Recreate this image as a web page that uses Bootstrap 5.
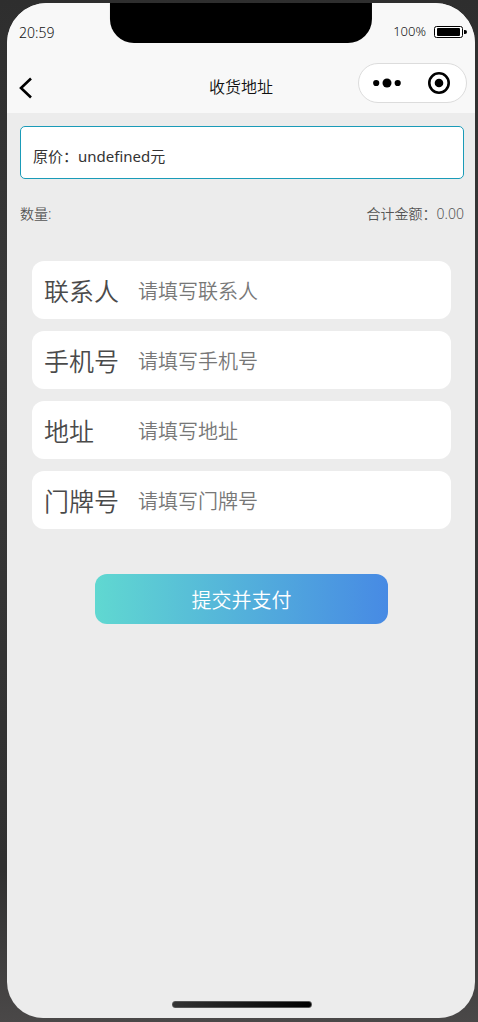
<!DOCTYPE html>
<html lang="zh-CN">
<head>
<meta charset="utf-8">
<meta name="viewport" content="width=device-width, initial-scale=1">
<title>收货地址</title>
<link href="https://cdn.jsdelivr.net/npm/bootstrap@5.3.0/dist/css/bootstrap.min.css" rel="stylesheet">
<style>
  body {
    background: linear-gradient(#2e2e2e, #383838 30%, #303030 85%, #4a4848);
    font-family: "Noto Sans", "Noto Sans CJK SC", sans-serif;
    font-weight: 350;
    padding: 3px 3px 4px 7px;
  }
  .phone { background: #ececec; border-radius: 40px 40px 36px 36px; }
  .phone-head { background: #f8f8f8; color: #111; padding-bottom: 2px; }
  .notch { width: 56%; height: 40px; background: #000; border-radius: 0 0 24px 24px; }
  .status-bar { height: 60px; padding: 0 8px 2px 12px; font-size: 14px; }
  .status-bar .battery-text { font-size: 13px; }
  .title-bar { height: 48px; padding: 0 8px 0 12px; }
  .title-bar h1 { font-size: 16px; font-weight: 350; padding: 2px 4px 0 0; }
  .side { flex: 1 1 0; }
  .capsule { width: 109px; height: 40px; border: 1px solid #dcdcdc; background: #fff; padding-right: 2px; }
  .plain-btn { background: none; border: 0; padding: 0; color: #000; line-height: 0; }
  .page-body { padding: 13px 11px 10px 13px; color: #555; }
  .price { border: 1px solid #1a9bb8; border-radius: 5px; padding: 18px 12px 11px; font-size: 15px; line-height: 22px; color: #333; font-weight: 400; }
  .totals { font-size: 14px; line-height: 20px; margin-top: 25px; }
  .order-form { margin: 37px 13px 0 12px; }
  .fields { gap: 12px; }
  .field { height: 58px; border-radius: 12px; padding: 3px 12px 0; }
  .field label { flex: 0 0 94px; font-size: 25px; color: #4a4a4a; }
  .field input { font-size: 20px; font-weight: 350; }
  .field input::placeholder { color: #777; opacity: 1; }
  .pay { width: 70%; height: 50px; margin-top: 45px; border-radius: 12px; font-size: 20px; font-weight: 350; color: #fff; background: linear-gradient(90deg, #60d8d1, #478ae4); }
  .pay.btn { padding: 3px 0 0; }
  .home-bar { width: 140px; height: 7px; border-radius: 3px; background: linear-gradient(90deg, #333, #000); border: 1px solid #555; }
</style>
</head>
<body class="d-flex flex-column min-vh-100">
<div class="phone position-relative flex-grow-1 d-flex flex-column overflow-hidden">
  <div class="notch position-absolute top-0 start-50 translate-middle-x"></div>
  <header class="phone-head">
    <div class="status-bar d-flex align-items-center justify-content-between">
      <span>20:59</span>
      <span class="d-flex align-items-center gap-2">
        <span class="battery-text">100%</span>
        <svg width="33" height="12" viewBox="0 0 33 12" aria-hidden="true"><rect x=".5" y=".5" width="28" height="11" rx="2" fill="#fff" stroke="#000"/><rect x="3" y="2" width="23" height="8" rx="1"/><path d="M30 4h1q2 0 2 2t-2 2h-1z"/></svg>
      </span>
    </div>
    <nav class="title-bar d-flex align-items-center">
      <div class="side">
        <button type="button" class="plain-btn" aria-label="返回"><svg width="14" height="22" viewBox="0 0 14 22" fill="none" stroke="#000" stroke-width="2.6"><path d="M12 1.5 2 11l10 9.500"/></svg></button>
      </div>
      <h1 class="m-0">收货地址</h1>
      <div class="side d-flex justify-content-end align-self-start">
        <div class="capsule rounded-pill d-flex align-items-center">
          <button type="button" class="plain-btn flex-fill" aria-label="更多"><svg width="28" height="10" viewBox="0 0 28 10"><circle cx="3.200" cy="5" r="3.100"/><circle cx="14" cy="5" r="4.500"/><circle cx="24.700" cy="5" r="3.100"/></svg></button>
          <button type="button" class="plain-btn flex-fill" aria-label="关闭"><svg width="22" height="22" viewBox="0 0 22 22"><circle cx="11" cy="11" r="9.700" fill="none" stroke="#000" stroke-width="2.600"/><circle cx="11" cy="11" r="4.300"/></svg></button>
        </div>
      </div>
    </nav>
  </header>
  <main class="page-body flex-grow-1 d-flex flex-column">
    <div class="price bg-white">原价：undefined元</div>
    <div class="totals d-flex justify-content-between"><span>数量:</span><span>合计金额：0.00</span></div>
    <form class="order-form d-flex flex-column">
      <div class="fields d-grid">
        <div class="field bg-white d-flex align-items-center"><label for="contact">联系人</label><input id="contact" type="text" class="form-control-plaintext p-0" placeholder="请填写联系人"></div>
        <div class="field bg-white d-flex align-items-center"><label for="phone">手机号</label><input id="phone" type="tel" class="form-control-plaintext p-0" placeholder="请填写手机号"></div>
        <div class="field bg-white d-flex align-items-center"><label for="address">地址</label><input id="address" type="text" class="form-control-plaintext p-0" placeholder="请填写地址"></div>
        <div class="field bg-white d-flex align-items-center"><label for="door">门牌号</label><input id="door" type="text" class="form-control-plaintext p-0" placeholder="请填写门牌号"></div>
      </div>
      <button type="submit" class="pay btn border-0 align-self-center">提交并支付</button>
    </form>
    <div class="home-bar mt-auto align-self-center"></div>
  </main>
</div>
<script src="https://cdn.jsdelivr.net/npm/bootstrap@5.3.0/dist/js/bootstrap.bundle.min.js"></script>
</body>
</html>
